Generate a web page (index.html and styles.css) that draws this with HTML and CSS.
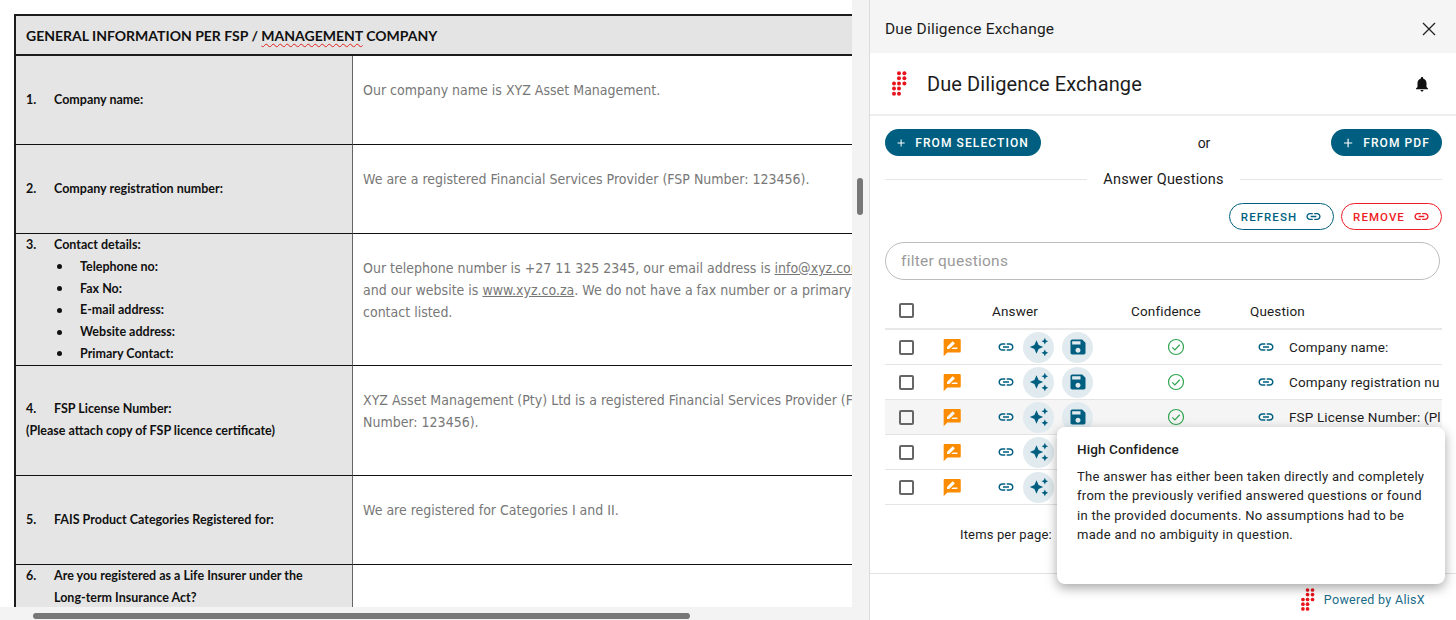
FILE: index.html
```html
<!DOCTYPE html>
<html lang="en">
<head>
<meta charset="utf-8">
<title>Due Diligence Exchange</title>
<link rel="stylesheet" href="styles.css">
</head>
<body>
<svg class="defs" width="0" height="0" aria-hidden="true">
  <symbol id="logo" viewBox="0 0 15 25">
    <g fill="#e8141c">
      <circle cx="7" cy="2.2" r="2"/><circle cx="12.4" cy="2.2" r="2"/>
      <circle cx="7" cy="7.2" r="2"/><circle cx="12.4" cy="7.2" r="2"/>
      <circle cx="2" cy="12.5" r="2"/><circle cx="7" cy="12.5" r="2"/><circle cx="12.4" cy="12.5" r="2"/>
      <circle cx="2" cy="17.6" r="2"/><circle cx="7" cy="17.6" r="2"/>
      <circle cx="2" cy="22.7" r="2"/><circle cx="7" cy="22.7" r="2"/>
    </g>
  </symbol>
  <symbol id="link" viewBox="0 0 24 24"><path fill="currentColor" d="M3.9 12c0-1.71 1.39-3.1 3.1-3.1h4V7H7c-2.76 0-5 2.24-5 5s2.24 5 5 5h4v-1.9H7c-1.71 0-3.1-1.39-3.1-3.1zM8 13h8v-2H8v2zm9-6h-4v1.9h4c1.71 0 3.1 1.39 3.1 3.1s-1.39 3.1-3.1 3.1h-4V17h4c2.76 0 5-2.24 5-5s-2.24-5-5-5z"/></symbol>
  <symbol id="spark" viewBox="0 0 24 24"><path fill="currentColor" d="M19 9l1.25-2.75L23 5l-2.75-1.25L19 1l-1.25 2.75L15 5l2.75 1.25L19 9zm-7.5.5L9 4 6.5 9.5 1 12l5.5 2.5L9 20l2.5-5.5L17 12l-5.5-2.5zM19 15l-1.25 2.75L15 19l2.75 1.25L19 23l1.25-2.75L23 19l-2.75-1.25L19 15z"/></symbol>
  <symbol id="save" viewBox="0 0 24 24"><path fill="currentColor" d="M17 3H5c-1.11 0-2 .9-2 2v14c0 1.1.89 2 2 2h14c1.1 0 2-.9 2-2V7l-4-4zm-5 16c-1.66 0-3-1.34-3-3s1.34-3 3-3 3 1.34 3 3-1.34 3-3 3zm3-10H5V5h10v4z"/></symbol>
  <symbol id="review" viewBox="0 0 24 24"><path fill="#fb8c00" fill-rule="evenodd" d="M21 2.5H3.500c-1 0-1.500.6-1.500 1.500v19l4.500-4.500H21c1 0 1.500-.6 1.500-1.500V4c0-.9-.5-1.500-1.500-1.500zM6 14.500v-2.600l6.500-6.500c.2-.2.5-.2.7 0l1.900 1.900c.2.2.2.5 0 .7l-6.500 6.500H6zm12.500 0h-7.500l2-2h5.500v2z"/></symbol>
  <symbol id="check" viewBox="0 0 24 24"><g fill="none" stroke="#2ea44f" stroke-width="1.600"><circle cx="12" cy="12" r="10"/><path d="M7 12.500l3.500 3.500 6.500-7"/></g></symbol>
  <symbol id="plus" viewBox="0 0 24 24"><path fill="currentColor" d="M19 13h-6v6h-2v-6H5v-2h6V5h2v6h6v2z"/></symbol>
</svg>

<main class="app">
  <section class="doc">
    <div class="doc-main">
      <div class="doc-view">
        <table class="sheet">
          <colgroup><col class="c-label"><col class="c-answer"></colgroup>
          <thead>
            <tr class="h-head"><th colspan="2">GENERAL INFORMATION PER FSP / <span class="spell">MANAGEMENT</span> COMPANY</th></tr>
          </thead>
          <tbody>
            <tr class="h-89">
              <td class="label"><span class="num">1.</span>Company name:</td>
              <td class="answer">Our company name is XYZ Asset Management.</td>
            </tr>
            <tr class="h-89">
              <td class="label"><span class="num">2.</span>Company registration number:</td>
              <td class="answer">We are a registered Financial Services Provider (FSP Number: 123456).</td>
            </tr>
            <tr class="h-131">
              <td class="label label-top">
                <span class="num">3.</span>Contact details:
                <ul class="bullets">
                  <li>Telephone no:</li>
                  <li>Fax No:</li>
                  <li>E-mail address:</li>
                  <li>Website address:</li>
                  <li>Primary Contact:</li>
                </ul>
              </td>
              <td class="answer">Our telephone number is +27 11 325 2345, our email address is <u>info@xyz.com</u>,<br>and our website is <u>www.xyz.co.za</u>. We do not have a fax number or a primary<br>contact listed.</td>
            </tr>
            <tr class="h-110">
              <td class="label"><span class="num">4.</span>FSP License Number:<br>(Please attach copy of FSP licence certificate)</td>
              <td class="answer">XYZ Asset Management (Pty) Ltd is a registered Financial Services Provider (FSP<br>Number: 123456).</td>
            </tr>
            <tr class="h-89">
              <td class="label"><span class="num">5.</span>FAIS Product Categories Registered for:</td>
              <td class="answer">We are registered for Categories I and II.</td>
            </tr>
            <tr class="h-110">
              <td class="label label-top"><span class="num">6.</span>Are you registered as a Life Insurer under the<br><span class="indent">Long-term Insurance Act?</span></td>
              <td class="answer"></td>
            </tr>
          </tbody>
        </table>
      </div>
      <div class="vtrack"><div class="vthumb"></div></div>
    </div>
    <div class="htrack"><div class="hthumb"></div></div>
  </section>

  <aside class="panel">
    <header class="bar">
      <span class="bar-title">Due Diligence Exchange</span>
      <svg class="close" viewBox="0 0 14 14"><path d="M1 1l12 12M13 1L1 13" fill="none" stroke="#222" stroke-width="1.300"/></svg>
    </header>
    <div class="brand">
      <svg class="brand-logo"><use href="#logo"/></svg>
      <h1 class="brand-title">Due Diligence Exchange</h1>
      <svg class="bell" viewBox="0 0 24 24"><path fill="#111" d="M12 22c1.100 0 2-.9 2-2h-4c0 1.100.89 2 2 2zm6-6v-5c0-3.070-1.640-5.640-4.500-6.320V4c0-.83-.67-1.500-1.500-1.500s-1.500.67-1.500 1.500v.68C7.630 5.360 6 7.920 6 11v5l-2 2v1h16v-1l-2-2z"/></svg>
    </div>
    <div class="content">
      <div class="actions">
        <button class="btn btn-sel"><svg class="ic-plus"><use href="#plus"/></svg>FROM SELECTION</button>
        <span class="or">or</span>
        <button class="btn btn-pdf"><svg class="ic-plus"><use href="#plus"/></svg>FROM PDF</button>
      </div>
      <div class="divider"><span>Answer Questions</span></div>
      <div class="links">
        <button class="pill pill-blue">REFRESH<svg class="ic-pill"><use href="#link"/></svg></button>
        <button class="pill pill-red">REMOVE<svg class="ic-pill"><use href="#link"/></svg></button>
      </div>
      <input class="filter" type="text" placeholder="filter questions">
      <div class="grid">
        <div class="row row-head">
          <div class="cell-check"><span class="box"></span></div>
          <div></div>
          <div class="cell-h">Answer</div>
          <div class="cell-h">Confidence</div>
          <div class="cell-h">Question</div>
        </div>
        <div class="row">
          <div class="cell-check"><span class="box"></span></div>
          <div class="cell-rev"><svg class="ic-rev"><use href="#review"/></svg></div>
          <div class="cell-ans"><svg class="ic-link"><use href="#link"/></svg><span class="round"><svg><use href="#spark"/></svg></span><span class="round"><svg><use href="#save"/></svg></span></div>
          <div class="cell-conf"><svg class="ic-check"><use href="#check"/></svg></div>
          <div class="cell-q"><svg class="ic-link"><use href="#link"/></svg><span class="q">Company name:</span></div>
        </div>
        <div class="row">
          <div class="cell-check"><span class="box"></span></div>
          <div class="cell-rev"><svg class="ic-rev"><use href="#review"/></svg></div>
          <div class="cell-ans"><svg class="ic-link"><use href="#link"/></svg><span class="round"><svg><use href="#spark"/></svg></span><span class="round"><svg><use href="#save"/></svg></span></div>
          <div class="cell-conf"><svg class="ic-check"><use href="#check"/></svg></div>
          <div class="cell-q"><svg class="ic-link"><use href="#link"/></svg><span class="q">Company registration number:</span></div>
        </div>
        <div class="row row-hover">
          <div class="cell-check"><span class="box"></span></div>
          <div class="cell-rev"><svg class="ic-rev"><use href="#review"/></svg></div>
          <div class="cell-ans"><svg class="ic-link"><use href="#link"/></svg><span class="round"><svg><use href="#spark"/></svg></span><span class="round"><svg><use href="#save"/></svg></span></div>
          <div class="cell-conf"><svg class="ic-check"><use href="#check"/></svg></div>
          <div class="cell-q"><svg class="ic-link"><use href="#link"/></svg><span class="q">FSP License Number: (Please attach copy of FSP licence certificate)</span></div>
        </div>
        <div class="row">
          <div class="cell-check"><span class="box"></span></div>
          <div class="cell-rev"><svg class="ic-rev"><use href="#review"/></svg></div>
          <div class="cell-ans"><svg class="ic-link"><use href="#link"/></svg><span class="round"><svg><use href="#spark"/></svg></span><span class="round"><svg><use href="#save"/></svg></span></div>
          <div class="cell-conf"><svg class="ic-check"><use href="#check"/></svg></div>
          <div class="cell-q"><svg class="ic-link"><use href="#link"/></svg><span class="q">Contact details:</span></div>
        </div>
        <div class="row">
          <div class="cell-check"><span class="box"></span></div>
          <div class="cell-rev"><svg class="ic-rev"><use href="#review"/></svg></div>
          <div class="cell-ans"><svg class="ic-link"><use href="#link"/></svg><span class="round"><svg><use href="#spark"/></svg></span><span class="round"><svg><use href="#save"/></svg></span></div>
          <div class="cell-conf"><svg class="ic-check"><use href="#check"/></svg></div>
          <div class="cell-q"><svg class="ic-link"><use href="#link"/></svg><span class="q">FAIS Product Categories Registered for:</span></div>
        </div>
      </div>
      <div class="pager">Items per page:</div>
    </div>
    <footer class="foot">
      <svg class="foot-logo"><use href="#logo"/></svg>
      <span class="powered">Powered by AlisX</span>
    </footer>
    <div class="tip">
      <div class="tip-title">High Confidence</div>
      <p class="tip-body">The answer has either been taken directly and completely from the previously verified answered questions or found in the provided documents. No assumptions had to be made and no ambiguity in question.</p>
    </div>
  </aside>
</main>
</body>
</html>
```

FILE: styles.css
```css
* { box-sizing: border-box; }
html, body { margin: 0; height: 100%; background: #fff; overflow: hidden; }
.defs { position: absolute; }
.app { display: flex; width: 1456px; height: 620px; }

/* document side */
.doc { width: 870px; height: 620px; display: flex; flex-direction: column; background: #f3f3f3; border-right: 1px solid #dcdcdc; flex: none; }
.doc-main { display: flex; height: 607px; }
.doc-view { width: 852px; height: 607px; overflow: hidden; background: #fff; padding: 14px 0 0 14px; flex: none; }
.vtrack { flex: 1; padding: 178px 0 0 5px; }
.vthumb { width: 6px; height: 37px; border-radius: 3px; background: #777; }
.htrack { height: 13px; padding: 6px 0 0 33px; }
.hthumb { width: 657px; height: 6px; border-radius: 3px; background: #777; }

.sheet { border-collapse: separate; border-spacing: 0; table-layout: fixed; width: 1100px; font-family: "Lato", sans-serif; color: #111; }
.c-label { width: 339px; }
.sheet th { height: 42px; padding: 0 0 0 10px; background: #e4e4e4; border-top: 2px solid #1c1c1c; border-left: 2px solid #1c1c1c; border-bottom: 2px solid #1c1c1c; text-align: left; font-size: 14px; font-weight: 700; white-space: nowrap; }
.spell { text-decoration: underline wavy #e0201c 1px; text-underline-offset: 2px; }
.h-89 td { height: 89px; }
.h-131 td { height: 131px; }
.h-110 td { height: 110px; }
.sheet td { border-bottom: 1px solid #111; padding: 0; }
.label { background: #e5e5e5; border-left: 2px solid #1c1c1c; border-right: 1px solid #666; padding: 0 0 0 10px !important; font-size: 12.5px; font-weight: 700; line-height: 21.8px; vertical-align: middle; }
.label-top { vertical-align: top; }
.num { display: inline-block; width: 28px; }
.indent { padding-left: 28px; }
.bullets { list-style: none; margin: 0; padding: 0 0 0 28px; }
.bullets li { display: flex; align-items: center; }
.bullets li::before { content: ""; width: 5px; height: 5px; border-radius: 50%; background: #111; margin: 0 18px 0 3px; }
.answer { vertical-align: top; padding: 23px 0 0 10px !important; font-family: "DejaVu Sans", sans-serif; font-stretch: condensed; font-size: 14px; line-height: 22px; color: #777; white-space: nowrap; }

/* panel */
.panel { position: relative; flex: 1; display: flex; flex-direction: column; height: 620px; font-family: "Roboto", sans-serif; color: #1c1c1c; background: #fff; }
.bar { height: 53px; flex: none; background: #f5f5f5; display: flex; align-items: center; justify-content: space-between; padding: 4px 20px 0 15px; }
.bar-title { font-size: 15.5px; letter-spacing: .2px; }
.close { width: 14px; height: 14px; }
.brand { height: 63px; flex: none; display: flex; align-items: center; padding: 0 25px 0 22px; border-bottom: 2px solid #eee; }
.brand-logo { width: 15px; height: 25px; }
.brand-title { margin: 0 0 0 20px; flex: 1; font-size: 20px; font-weight: 400; letter-spacing: .1px; }
.bell { width: 18px; height: 18px; }
.content { flex: 1; padding: 13px 14px 0 15px; }
.actions { display: flex; align-items: center; justify-content: space-between; height: 27px; }
.btn { display: flex; align-items: center; height: 27px; border: 0; border-radius: 14px; background: #005f80; color: #fff; font: 500 12px "Roboto", sans-serif; letter-spacing: 1.1px; padding: 0 12px 0 10px; white-space: nowrap; }
.btn-sel { width: 156px; }
.btn-pdf { width: 111px; }
.ic-plus { width: 16px; height: 16px; margin-right: 8px; }
.or { font-size: 14px; margin-left: 32px; margin-right: -4px; }
.divider { display: flex; align-items: center; gap: 16px; height: 20px; margin-top: 13px; font-size: 14.500px; letter-spacing: .2px; white-space: nowrap; }
.divider::before, .divider::after { content: ""; flex: 1; height: 1px; background: #e6e6e6; }
.links { display: flex; justify-content: flex-end; gap: 7px; margin-top: 14px; }
.pill { display: flex; align-items: center; justify-content: center; gap: 8px; height: 27px; border-radius: 14px; background: #fff; font: 500 11.500px "Roboto", sans-serif; letter-spacing: 1.050px; padding: 0; }
.pill-blue { width: 105px; color: #005f80; border: 1px solid #005f80; }
.pill-red { width: 101px; color: #ee1c25; border: 1px solid #ee1c25; }
.ic-pill { width: 17px; height: 17px; }
.filter { display: block; width: 555px; height: 38px; margin-top: 12px; padding: 0 15px; border: 1px solid #bdbdbd; border-radius: 19px; font: 400 15.500px "Roboto", sans-serif; letter-spacing: .25px; outline: 0; }
.filter::placeholder { color: #9a9a9a; opacity: 1; }

.grid { margin-top: 13px; }
.row { display: grid; grid-template-columns: 42px 49px 139px 119px 206px; height: 35px; align-items: center; border-bottom: 1px solid #e4e4e4; }
.row-head { height: 37px; border-bottom: 2px solid #e8e8e8; font-size: 13.500px; letter-spacing: .15px; }
.row-hover { background: #f5f5f5; }
.cell-check { display: flex; justify-content: center; }
.box { width: 15px; height: 15px; border: 2px solid #666; border-radius: 2px; }
.cell-rev { display: flex; justify-content: center; }
.ic-rev { width: 20px; height: 20px; }
.cell-h { padding-left: 16px; white-space: nowrap; }
.cell-ans { display: flex; align-items: center; padding-left: 21px; color: #005f80; }
.ic-link { width: 18px; height: 18px; color: #005f80; flex: none; }
.round { flex: none; display: flex; align-items: center; justify-content: center; width: 31px; height: 31px; border-radius: 50%; background: #e1ebef; margin-left: 8px; }
.round + .round { margin-left: 8px; }
.round svg { width: 20px; height: 20px; }
.cell-conf { display: flex; justify-content: center; padding-left: 3px; }
.ic-check { width: 18px; height: 18px; }
.cell-q { display: flex; align-items: center; gap: 14px; padding-left: 23px; font-size: 13.500px; letter-spacing: .15px; overflow: hidden; white-space: nowrap; }
.q { flex: none; }
.pager { margin: 21px 0 0 75px; font-size: 13px; letter-spacing: .15px; line-height: 18px; }
.foot { height: 47px; flex: none; display: flex; align-items: center; justify-content: flex-end; padding: 4px 31px 0 0; border-top: 1px solid #e2e2e2; }
.foot-logo { width: 14px; height: 23px; margin-right: 9px; }
.powered { font-size: 12.500px; letter-spacing: .3px; color: #1a6c8a; }
.tip { position: absolute; left: 187px; top: 427px; width: 388px; height: 157px; padding: 13px 20px; background: #fff; border-radius: 8px; box-shadow: 0 4px 12px rgba(0,0,0,.35); }
.tip-title { font-size: 13.500px; font-weight: 500; letter-spacing: .1px; line-height: 18px; }
.tip-body { margin: 9px 0 0; font-size: 13px; letter-spacing: .3px; line-height: 19.400px; color: #222; }
```
